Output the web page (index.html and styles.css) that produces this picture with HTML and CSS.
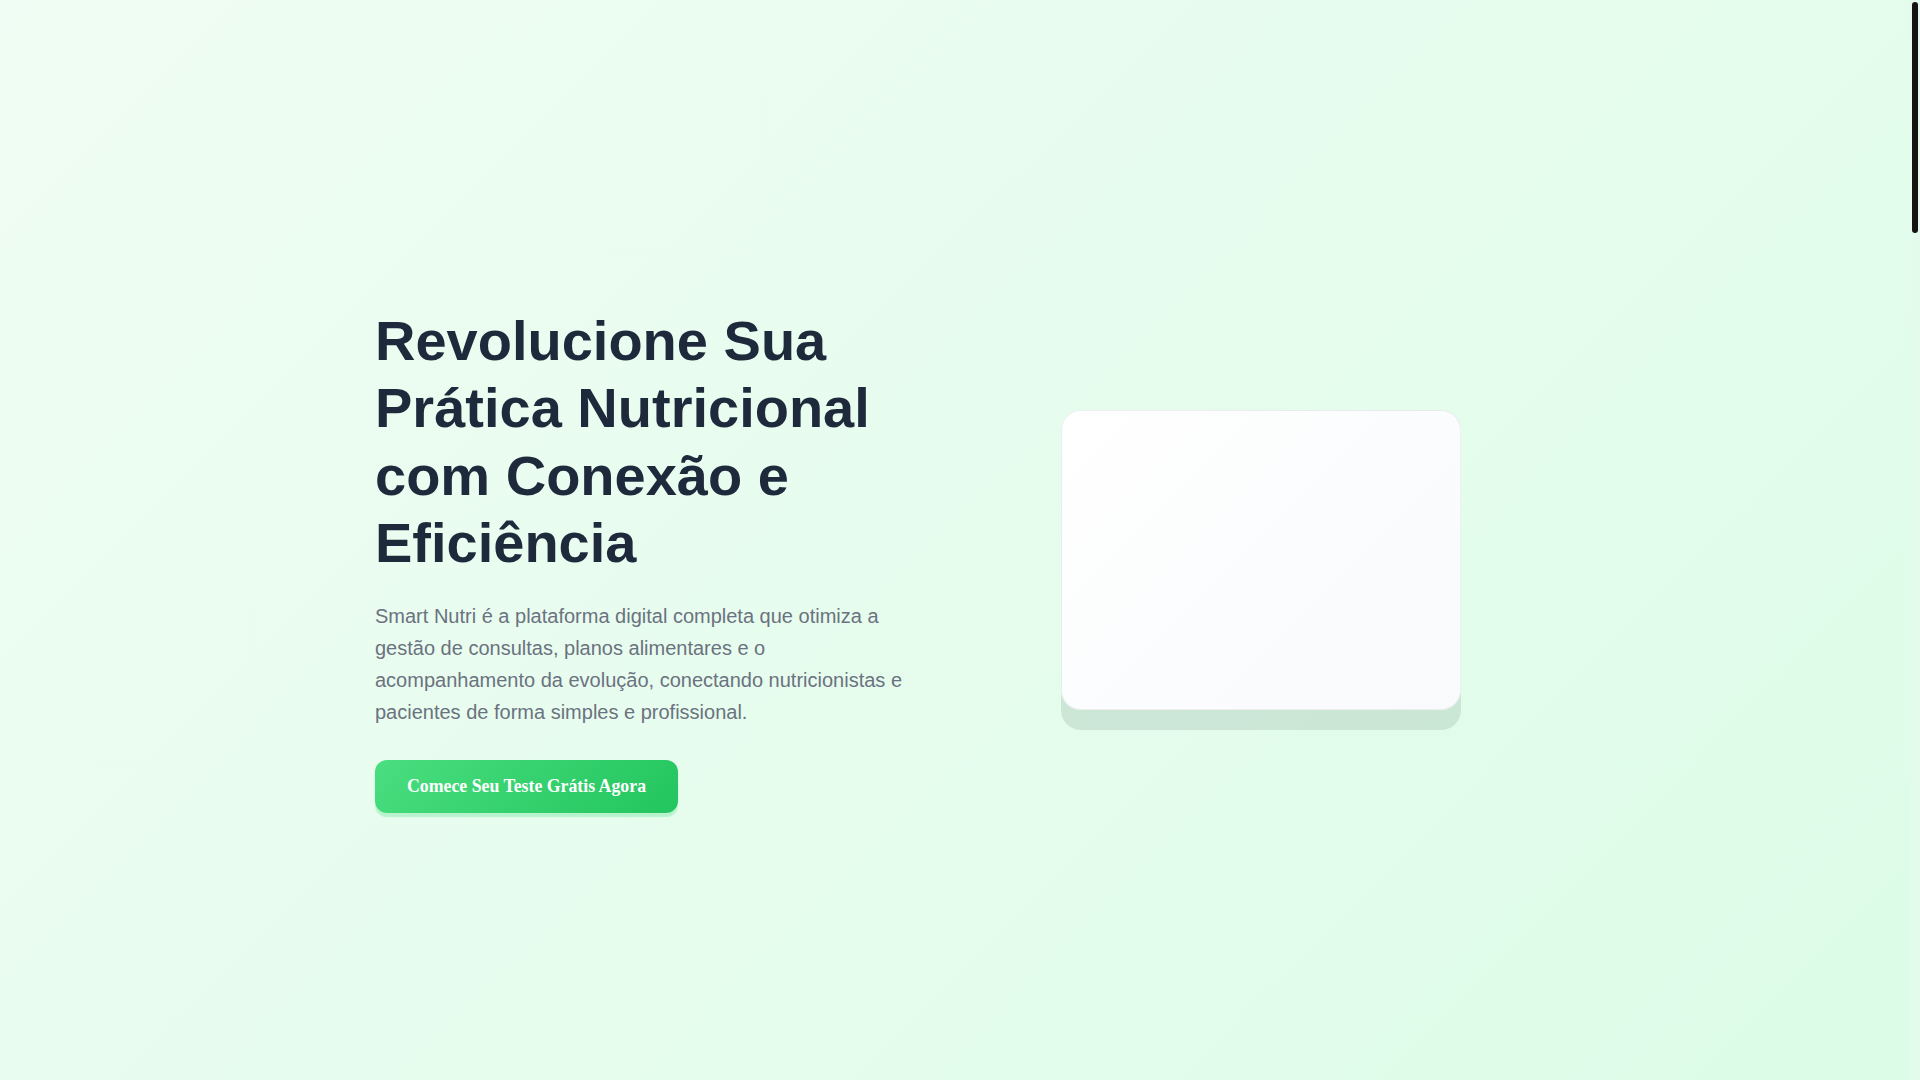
FILE: index.html
```html
<!DOCTYPE html>
<html lang="pt-BR">
<head>
<meta charset="utf-8">
<title>Smart Nutri</title>
<link rel="stylesheet" href="styles.css">
</head>
<body>
<main class="page">
  <section class="hero">
    <div class="container hero-grid">
      <div class="hero-text">
        <h1 class="hero-title">Revolucione Sua Prática Nutricional com Conexão e Eficiência</h1>
        <p class="hero-lead">Smart Nutri é a plataforma digital completa que otimiza a gestão de consultas, planos alimentares e o acompanhamento da evolução, conectando nutricionistas e pacientes de forma simples e profissional.</p>
        <button class="cta">Comece Seu Teste Grátis Agora</button>
      </div>
      <div class="hero-visual">
        <div class="mock-card"></div>
      </div>
    </div>
  </section>
  <section class="below"></section>
</main>
<div class="scroll-rail" aria-hidden="true"><div class="scroll-thumb"></div></div>
</body>
</html>
```

FILE: styles.css
```css
html, body {
  margin: 0;
  padding: 0;
}

body {
  font-family: "Liberation Sans", Arial, sans-serif;
  background: #e2fbea;
}

.page {
  margin-right: 10px;
}

.hero {
  min-height: 100vh;
  box-sizing: border-box;
  padding-top: 40px;
  display: flex;
  align-items: center;
  background: linear-gradient(135deg, #f0fdf4 0%, #dcfce7 100%);
}

.container {
  width: 100%;
  max-width: 1200px;
  margin: 0 auto;
  padding: 0 20px;
  box-sizing: border-box;
}

.hero-grid {
  display: grid;
  grid-template-columns: 1fr 1fr;
  gap: 64px;
  align-items: center;
}

.hero-title {
  margin: 0 0 24px;
  font-size: 56px;
  line-height: 1.2;
  font-weight: 700;
  color: #1e293b;
}

.hero-lead {
  margin: 0 0 32px;
  font-size: 20px;
  line-height: 1.6;
  color: #6b7280;
}

.cta {
  display: inline-block;
  border: none;
  border-radius: 12px;
  padding: 16px 32px;
  font-family: "Liberation Serif", "Times New Roman", serif;
  font-weight: 700;
  font-size: 17.8px;
  color: #ffffff;
  background: linear-gradient(135deg, #4ade80 0%, #22c55e 100%);
  box-shadow: 0 4px 1px rgba(74, 222, 128, 0.3);
  cursor: pointer;
}

.hero-visual {
  display: flex;
  justify-content: center;
}

.mock-card {
  width: 400px;
  height: 300px;
  box-sizing: border-box;
  border: 1px solid rgba(0, 0, 0, 0.06);
  border-radius: 20px;
  background: linear-gradient(135deg, #ffffff 0%, #f8fafc 100%);
  box-shadow: 0 20px 0 rgba(0, 40, 20, 0.1);
}

.below {
  height: 3970px;
  background: #f0fdf4;
}

.scroll-rail {
  position: fixed;
  top: 0;
  right: 0;
  width: 10px;
  height: 100vh;
  background: #e3fbeb;
}

.scroll-thumb {
  margin: 2px 2px 0;
  height: 231px;
  border-radius: 3px;
  background: #141414;
}
```
